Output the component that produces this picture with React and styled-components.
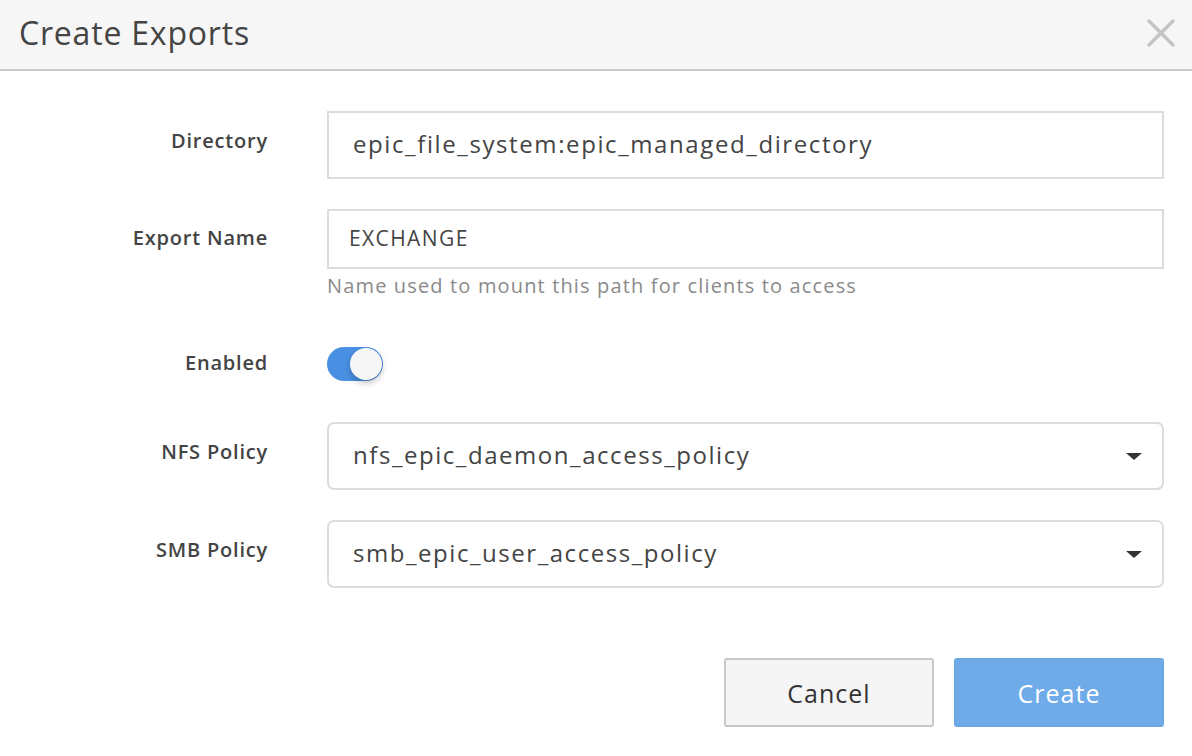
import styled, { createGlobalStyle } from "styled-components";

const GlobalStyle = createGlobalStyle`
  html, body {
    margin: 0;
    padding: 0;
    background: #ffffff;
    font-family: "Open Sans", "Lato", sans-serif;
    color: #444444;
  }
  * { box-sizing: border-box; }
`;

export default function App() {
  return (
    <>
      <GlobalStyle />
      <Modal>
        <Header>
          <Title>Create Exports</Title>
          <Close aria-label="close">
            <svg width="28" height="28" viewBox="0 0 28 28">
              <path
                d="M2 2 L26 26 M26 2 L2 26"
                stroke="#c4c4c4"
                strokeWidth="3.4"
                strokeLinecap="round"
              />
            </svg>
          </Close>
        </Header>
        <Body>
          <Row $gap={30}>
            <Label $h={60}>Directory</Label>
            <Field>
              <TextBox $h={68} $size={24} $pad={24} $ls={1.6}>
                epic_file_system:epic_managed_directory
              </TextBox>
            </Field>
          </Row>
          <Row $gap={50}>
            <Label $h={58}>Export Name</Label>
            <Field>
              <TextBox $h={60} $size={21} $pad={20} $ls={1.4}>
                EXCHANGE
              </TextBox>
              <Help>Name used to mount this path for clients to access</Help>
            </Field>
          </Row>
          <Row $gap={41}>
            <Label $h={32}>Enabled</Label>
            <Field>
              <Toggle>
                <Knob />
              </Toggle>
            </Field>
          </Row>
          <Row $gap={30}>
            <Label $h={60}>NFS Policy</Label>
            <Field>
              <Select>
                <span>nfs_epic_daemon_access_policy</span>
                <Caret />
              </Select>
            </Field>
          </Row>
          <Row $gap={70}>
            <Label $h={60}>SMB Policy</Label>
            <Field>
              <Select>
                <span>smb_epic_user_access_policy</span>
                <Caret />
              </Select>
            </Field>
          </Row>
          <Footer>
            <Button>Cancel</Button>
            <Button $primary>Create</Button>
          </Footer>
        </Body>
      </Modal>
    </>
  );
}

const Modal = styled.div`
  width: 1192px;
  height: 756px;
  background: #ffffff;
  overflow: hidden;
`;

const Header = styled.div`
  height: 71px;
  background: #f6f6f6;
  border-bottom: 2px solid #cacaca;
  display: flex;
  align-items: center;
  justify-content: space-between;
  padding: 0 17px 4px 19px;
`;

const Title = styled.h1`
  margin: 0;
  font-size: 32px;
  font-weight: 400;
  color: #444444;
  letter-spacing: 0.8px;
`;

const Close = styled.div`
  display: flex;
  align-items: center;
  justify-content: center;
  width: 28px;
  height: 28px;
`;

const Body = styled.div`
  padding: 40px 28px 0 0;
`;

const Row = styled.div`
  display: flex;
  align-items: flex-start;
  gap: 60px;
  margin-bottom: ${(p) => p.$gap}px;
`;

const Label = styled.div`
  width: 268px;
  flex-shrink: 0;
  text-align: right;
  font-size: 20px;
  font-weight: 600;
  letter-spacing: 0.8px;
  color: #444444;
  line-height: ${(p) => p.$h}px;
`;

const Field = styled.div`
  flex: 1;
  margin-left: -1px;
  display: flex;
  flex-direction: column;
`;

const TextBox = styled.div`
  height: ${(p) => p.$h}px;
  border: 2px solid #dcdcdc;
  display: flex;
  align-items: center;
  padding: 0 0 3px ${(p) => p.$pad}px;
  font-size: ${(p) => p.$size}px;
  letter-spacing: ${(p) => p.$ls}px;
  color: #444444;
`;

const Help = styled.div`
  margin-top: 6px;
  font-size: 20px;
  line-height: 22px;
  letter-spacing: 1.15px;
  color: #8a8a8a;
`;

const Toggle = styled.div`
  position: relative;
  width: 56px;
  height: 34px;
  border-radius: 17px;
  background: #4a90e2;
`;

const Knob = styled.div`
  position: absolute;
  top: 1px;
  right: 1px;
  width: 32px;
  height: 32px;
  border-radius: 50%;
  background: #f6f6f6;
  box-shadow: 0 3px 6px rgba(0, 0, 0, 0.25);
`;

const Select = styled.div`
  height: 68px;
  border: 2px solid #dcdcdc;
  border-radius: 7px;
  display: flex;
  align-items: center;
  justify-content: space-between;
  padding: 0 20px 0 24px;
  font-size: 24px;
  letter-spacing: 1.55px;
  color: #444444;

  & > span {
    margin-bottom: 3px;
  }
`;

const Caret = styled.div`
  width: 0;
  height: 0;
  border-left: 8px solid transparent;
  border-right: 8px solid transparent;
  border-top: 7px solid #333333;
`;

const Footer = styled.div`
  display: flex;
  justify-content: flex-end;
  gap: 20px;
`;

const Button = styled.button`
  width: 210px;
  height: 69px;
  border-radius: 3px;
  font-family: inherit;
  font-size: 25px;
  letter-spacing: 1px;
  border: 2px solid ${(p) => (p.$primary ? "#6aa8e6" : "#c8c8c8")};
  background: ${(p) => (p.$primary ? "#6eabe8" : "#f5f5f5")};
  color: ${(p) => (p.$primary ? "#ffffff" : "#333333")};
`;
